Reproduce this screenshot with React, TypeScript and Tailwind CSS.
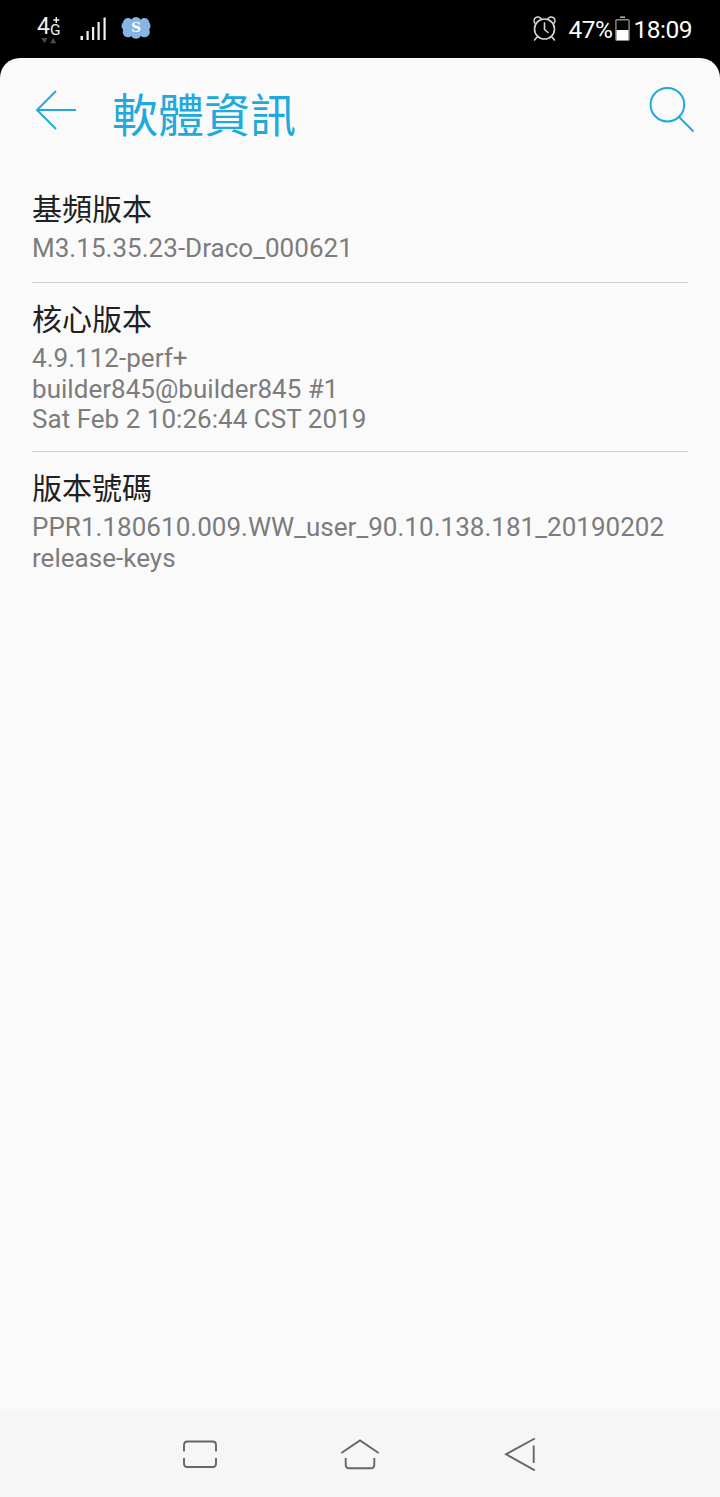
const entries = [
  { title: '基頻版本', lines: ['M3.15.35.23-Draco_000621'] },
  { title: '核心版本', lines: ['4.9.112-perf+', 'builder845@builder845 #1', 'Sat Feb 2 10:26:44 CST 2019'] },
  { title: '版本號碼', lines: ['PPR1.180610.009.WW_user_90.10.138.181_20190202', 'release-keys'] },
];

function NetworkIcon() {
  return (
    <div className="relative h-8 w-7 text-[#eeeeee]">
      <span className="absolute left-0 top-0 text-[23px] leading-[26px]">4</span>
      <span className="absolute left-[13px] top-[7px] text-[15.500px] leading-[18px]">G</span>
      <svg className="absolute inset-0" width="28" height="32" viewBox="0 0 28 32" fill="none">
        <path d="M19.300 3v6M16.300 6h6" stroke="#eee" strokeWidth="1.500" />
        <path d="M4.300 24h6.200l-3.100 5.300zM13 29.300h6.300L16.200 24z" fill="#4b4b4b" />
      </svg>
    </div>
  );
}

function SignalIcon() {
  return (
    <svg className="ml-[15px] mt-4" width="28" height="25" viewBox="0 0 28 25" fill="#f0f0f0">
      <rect x="0.500" y="20" width="2.500" height="4" />
      <rect x="6.500" y="15" width="2.200" height="9" />
      <rect x="12" y="11" width="2.200" height="13" />
      <rect x="17.500" y="6" width="2.200" height="18" />
      <rect x="23.500" y="1.500" width="2.200" height="22.500" />
    </svg>
  );
}

function CloudIcon() {
  return (
    <div className="relative ml-[13px] mt-4 h-6 w-[30px]">
      <svg width="30" height="24" viewBox="0 0 30 24" fill="#86b5e3">
        <circle cx="7" cy="7" r="5" />
        <circle cx="15" cy="6.200" r="5.200" />
        <circle cx="23.300" cy="7" r="5" />
        <circle cx="5.500" cy="10" r="5" />
        <circle cx="24.500" cy="10" r="5" />
        <circle cx="7" cy="16" r="5.300" />
        <circle cx="15" cy="17.500" r="5.300" />
        <circle cx="23.500" cy="16" r="5.300" />
        <rect x="4" y="4" width="22" height="15" />
      </svg>
      <span className="absolute inset-0 text-center font-['DejaVu_Serif',serif] text-[13.500px] font-bold leading-[22px] text-white">S</span>
    </div>
  );
}

function StatusBar() {
  return (
    <header className="flex h-[58px] justify-between pl-[37px] pr-[28px] text-white">
      <div className="flex">
        <div className="mt-[14px]"><NetworkIcon /></div>
        <SignalIcon />
        <CloudIcon />
      </div>
      <div className="flex text-[24.500px] leading-[30px] tracking-[-0.5px]">
        <svg className="mr-3 mt-[15px]" width="24" height="27" viewBox="0 0 24 27" fill="none" stroke="#d8d8d8" strokeWidth="1.600" strokeLinecap="round">
          <circle cx="11.500" cy="14" r="10" />
          <path d="M11.500 8v6.500l3.500 3M1.800 8A3.800 3.800 0 1 1 8 3.600M15 3.600a3.800 3.800 0 1 1 6.200 4.400M4.200 22 1.500 25M18.800 22l2.700 3" />
        </svg>
        <span className="mt-[15px]">47%</span>
        <svg className="ml-[3px] mt-4" width="15" height="26" viewBox="0 0 15 26" fill="none">
          <path d="M5 1.200h5" stroke="#aaa" strokeWidth="1.600" />
          <rect x="0.900" y="3.700" width="13.200" height="20.600" rx="1" stroke="#8c8c8c" strokeWidth="1.400" />
          <rect x="1.500" y="14" width="12" height="10" fill="#fff" />
        </svg>
        <span className="ml-[3px] mt-[15px]">18:09</span>
      </div>
    </header>
  );
}

export default function App() {
  return (
    <div className="flex h-[1497px] w-[720px] flex-col bg-black font-[Roboto,'Noto_Sans_CJK_TC',sans-serif]">
      <StatusBar />
      <main className="flex-1 rounded-t-[20px] bg-[#fafafa]">
        <div className="flex h-[114px] items-start pl-[35px] pr-[25px] text-[#20a9da]">
          <svg className="mt-8" width="42" height="40" viewBox="0 0 42 40" fill="none" stroke="currentColor" strokeWidth="1.900">
            <path d="M41 20H2M21 1 2 20l19 19" />
          </svg>
          <h1 className="ml-[35px] mt-7 text-[46px] font-normal leading-[60px]">軟體資訊</h1>
          <svg className="ml-auto mt-7" width="46" height="48" viewBox="0 0 46 48" fill="none" stroke="currentColor" strokeWidth="2">
            <circle cx="18.400" cy="18.700" r="16.800" />
            <path d="m30 31 14.500 14.500" />
          </svg>
        </div>
        <div className="mx-8 divide-y divide-[#cfcfcf]">
          {entries.map((entry, index) => (
            <section key={entry.title} className={index === 0 ? 'h-[111px] pt-[18px]' : 'h-[169px] pt-[17px]'}>
              <h2 className="mb-[3px] text-[30px] font-normal leading-[40px] text-[#212121]">{entry.title}</h2>
              <div className="whitespace-nowrap text-[26px] leading-[30.500px] tracking-[0.03px] text-[#7c7c7c]">
                {entry.lines.map((line) => <p key={line}>{line}</p>)}
              </div>
            </section>
          ))}
        </div>
      </main>
      <nav className="flex h-[86px] items-center justify-center gap-[120px] bg-[#f6f6f6] text-[#666]">
        <svg width="40" height="40" viewBox="0 0 40 40" fill="none" stroke="currentColor" strokeWidth="1.900">
          <path d="M4 17.500V11q0-3.500 3.500-3.500h25q3.500 0 3.500 3.500v6.500M4 24v5.500q0 3.500 3.500 3.500h25q3.500 0 3.500-3.500V24" />
        </svg>
        <svg width="40" height="40" viewBox="0 0 40 40" fill="none" stroke="currentColor" strokeWidth="1.900">
          <path d="M1.300 19 20 6.500 38.700 19M5.700 24v6.500q0 3.800 3.500 3.800h21.600q3.500 0 3.500-3.800V24" />
        </svg>
        <svg width="40" height="40" viewBox="0 0 40 40" fill="none" stroke="currentColor" strokeWidth="1.900">
          <path d="M34.800 4.500 6 20.300l28.800 16M33.700 11.500v17.500" />
        </svg>
      </nav>
    </div>
  );
}
